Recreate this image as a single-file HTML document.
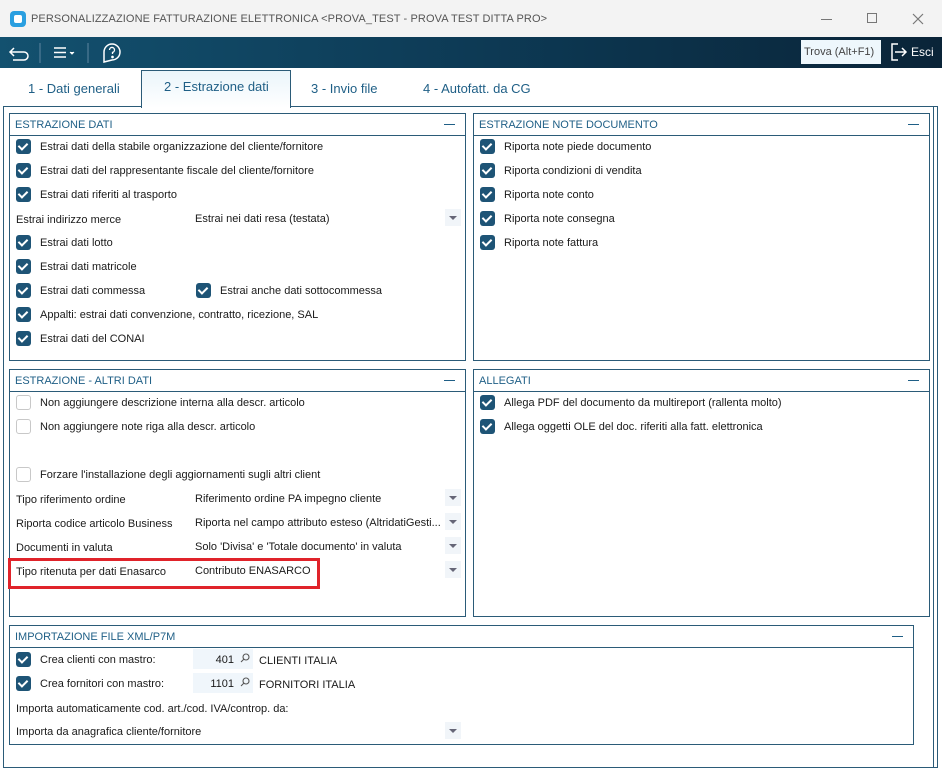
<!DOCTYPE html>
<html><head><meta charset="utf-8"><style>
*{margin:0;padding:0;box-sizing:border-box}
body{width:942px;height:771px;overflow:hidden;background:#fff;font-family:"Liberation Sans",sans-serif;font-size:11px;color:#1a1a1a;position:relative}
.a{position:absolute}
.t{position:absolute;white-space:nowrap;line-height:14px}
.panel{position:absolute;border:1px solid #2b5b78;background:#fff}
.ph{position:absolute;left:0;right:0;top:0;height:22px;border-bottom:1px solid #2b5b78;color:#1f5f86;font-size:11px;line-height:22px;padding-left:5px}
.ph:after{content:"";position:absolute;right:10px;top:10px;width:11px;height:1px;background:#1f5f86}
.cb{position:absolute;width:15px;height:15px;border-radius:3px;background:#1e5476}
.cb:after{content:"";position:absolute;left:4px;top:2px;width:4px;height:7px;border:solid #fff;border-width:0 2px 2px 0;transform:rotate(45deg)}
.cu{position:absolute;width:15px;height:15px;border-radius:3px;border:1px solid #c8c8c8;background:#fff}
.dd{position:absolute;width:16px;height:17px;background:#f1f5f9}
.dd:after{content:"";position:absolute;left:4px;top:7px;border-left:4px solid transparent;border-right:4px solid transparent;border-top:4px solid #667}
.tab{position:absolute;white-space:nowrap;font-size:13px;color:#1f5f86;line-height:16px}
</style></head><body>
<!-- title bar -->
<div class="a" style="left:0;top:0;width:942px;height:37px;background:#f3f3f3"></div>
<div class="a" style="left:10px;top:11px;width:16px;height:16px;border-radius:4px;background:#2a9fe0"></div>
<div class="a" style="left:14px;top:15px;width:8px;height:8px;border-radius:2px;background:#fff"></div>
<div class="t" style="left:31px;top:12px;font-size:11px;color:#555;letter-spacing:0.1px">PERSONALIZZAZIONE FATTURAZIONE ELETTRONICA &lt;PROVA_TEST - PROVA TEST DITTA PRO&gt;</div>
<div class="a" style="left:821px;top:19px;width:11px;height:1px;background:#777"></div>
<div class="a" style="left:867px;top:13px;width:10px;height:10px;border:1px solid #777"></div>
<svg class="a" style="left:912px;top:13px" width="12" height="12" viewBox="0 0 12 12" stroke="#777" stroke-width="1.2"><path d="M1 1 L11 11 M11 1 L1 11"/></svg>
<!-- toolbar -->
<div class="a" style="left:0;top:37px;width:942px;height:31px;background:linear-gradient(90deg,#13516f,#0d3a55 50%,#0a2438)"></div>
<svg class="a" style="left:8px;top:40px" width="130" height="26" viewBox="0 0 130 26" fill="none" stroke="#fff" stroke-width="1.5">
<path d="M6 8 L2 12 L6 16 M2 12 H16 a4 4 0 0 1 0 8 H5"/>
<line x1="32" y1="3" x2="32" y2="23" stroke="#5d86a0" stroke-width="1"/>
<path d="M46 8 H58 M46 12.5 H58 M46 17 H58"/>
<path d="M62 12 l2 2 l2-2" fill="#fff" stroke-width="1"/>
<line x1="80" y1="3" x2="80" y2="23" stroke="#5d86a0" stroke-width="1"/>
<path d="M96 22 L96 12 a8 8 0 1 1 8 8 Z"/>
<path d="M101.5 10 a2.5 2.5 0 1 1 3 2.4 v1.6" stroke-width="1.3"/>
<circle cx="104.5" cy="17" r=".6" fill="#fff"/>
</svg>
<div class="a" style="left:801px;top:40px;width:80px;height:24px;background:#eef7fc"></div>
<div class="t" style="left:804px;top:45px;color:#444">Trova (Alt+F1)</div>
<svg class="a" style="left:889px;top:42px" width="20" height="20" viewBox="0 0 20 20" fill="none" stroke="#fff" stroke-width="1.5"><path d="M9 2 H3 V18 H9"/><path d="M6 10 H17 M13 6 L17 10 L13 14"/></svg>
<div class="t" style="left:911px;top:45px;color:#fff;font-size:12px">Esci</div>
<!-- tabs -->
<div class="a" style="left:141px;top:70px;width:150px;height:38px;border:1px solid #2b5b78;border-bottom:none;background:linear-gradient(#eaf5fb,#fff)"></div>
<div class="tab" style="left:28px;top:81px">1 - Dati generali</div>
<div class="tab" style="left:164px;top:79px">2 - Estrazione dati</div>
<div class="tab" style="left:311px;top:81px">3 - Invio file</div>
<div class="tab" style="left:423px;top:81px">4 - Autofatt. da CG</div>
<div class="a" style="left:3px;top:106px;width:935px;height:662px;border:1px solid #2b5b78;border-top:none"></div>
<div class="a" style="left:3px;top:106px;width:138px;height:1px;background:#2b5b78"></div>
<div class="a" style="left:291px;top:106px;width:647px;height:1px;background:#2b5b78"></div>
<div class="a" style="left:933px;top:107px;width:1px;height:660px;background:#2b5b78"></div>

<!-- ESTRAZIONE DATI -->
<div class="panel" style="left:9px;top:113px;width:457px;height:248px"><div class="ph">ESTRAZIONE DATI</div></div>
<div class="cb" style="left:16px;top:139px"></div><div class="t" style="left:40px;top:140px">Estrai dati della stabile organizzazione del cliente/fornitore</div>
<div class="cb" style="left:16px;top:163px"></div><div class="t" style="left:40px;top:164px">Estrai dati del rappresentante fiscale del cliente/fornitore</div>
<div class="cb" style="left:16px;top:187px"></div><div class="t" style="left:40px;top:188px">Estrai dati riferiti al trasporto</div>
<div class="t" style="left:16px;top:213px">Estrai indirizzo merce</div><div class="t" style="left:195px;top:212px">Estrai nei dati resa (testata)</div><div class="dd" style="left:445px;top:209px"></div>
<div class="cb" style="left:16px;top:235px"></div><div class="t" style="left:40px;top:236px">Estrai dati lotto</div>
<div class="cb" style="left:16px;top:259px"></div><div class="t" style="left:40px;top:260px">Estrai dati matricole</div>
<div class="cb" style="left:16px;top:283px"></div><div class="t" style="left:40px;top:284px">Estrai dati commessa</div>
<div class="cb" style="left:196px;top:283px"></div><div class="t" style="left:220px;top:284px">Estrai anche dati sottocommessa</div>
<div class="cb" style="left:16px;top:307px"></div><div class="t" style="left:40px;top:308px">Appalti: estrai dati convenzione, contratto, ricezione, SAL</div>
<div class="cb" style="left:16px;top:331px"></div><div class="t" style="left:40px;top:332px">Estrai dati del CONAI</div>

<!-- NOTE DOCUMENTO -->
<div class="panel" style="left:473px;top:113px;width:457px;height:248px"><div class="ph">ESTRAZIONE NOTE DOCUMENTO</div></div>
<div class="cb" style="left:480px;top:139px"></div><div class="t" style="left:504px;top:140px">Riporta note piede documento</div>
<div class="cb" style="left:480px;top:163px"></div><div class="t" style="left:504px;top:164px">Riporta condizioni di vendita</div>
<div class="cb" style="left:480px;top:187px"></div><div class="t" style="left:504px;top:188px">Riporta note conto</div>
<div class="cb" style="left:480px;top:211px"></div><div class="t" style="left:504px;top:212px">Riporta note consegna</div>
<div class="cb" style="left:480px;top:235px"></div><div class="t" style="left:504px;top:236px">Riporta note fattura</div>

<!-- ALTRI DATI -->
<div class="panel" style="left:9px;top:369px;width:457px;height:248px"><div class="ph">ESTRAZIONE - ALTRI DATI</div></div>
<div class="cu" style="left:16px;top:395px"></div><div class="t" style="left:40px;top:396px">Non aggiungere descrizione interna alla descr. articolo</div>
<div class="cu" style="left:16px;top:419px"></div><div class="t" style="left:40px;top:420px">Non aggiungere note riga alla descr. articolo</div>
<div class="cu" style="left:16px;top:467px"></div><div class="t" style="left:40px;top:468px">Forzare l'installazione degli aggiornamenti sugli altri client</div>
<div class="t" style="left:16px;top:493px">Tipo riferimento ordine</div><div class="t" style="left:195px;top:492px">Riferimento ordine PA impegno cliente</div><div class="dd" style="left:445px;top:489px"></div>
<div class="t" style="left:16px;top:517px">Riporta codice articolo Business</div><div class="t" style="left:195px;top:516px">Riporta nel campo attributo esteso (AltridatiGesti...</div><div class="dd" style="left:445px;top:513px"></div>
<div class="t" style="left:16px;top:541px">Documenti in valuta</div><div class="t" style="left:195px;top:540px">Solo 'Divisa' e 'Totale documento' in valuta</div><div class="dd" style="left:445px;top:537px"></div>
<div class="t" style="left:16px;top:565px">Tipo ritenuta per dati Enasarco</div><div class="t" style="left:195px;top:564px">Contributo ENASARCO</div><div class="dd" style="left:445px;top:561px"></div>
<div class="a" style="left:8px;top:558px;width:312px;height:31px;border:3px solid #e0232a"></div>

<!-- ALLEGATI -->
<div class="panel" style="left:473px;top:369px;width:457px;height:248px"><div class="ph">ALLEGATI</div></div>
<div class="cb" style="left:480px;top:395px"></div><div class="t" style="left:504px;top:396px">Allega PDF del documento da multireport (rallenta molto)</div>
<div class="cb" style="left:480px;top:419px"></div><div class="t" style="left:504px;top:420px">Allega oggetti OLE del doc. riferiti alla fatt. elettronica</div>

<!-- IMPORTAZIONE -->
<div class="panel" style="left:9px;top:625px;width:905px;height:120px"><div class="ph">IMPORTAZIONE FILE XML/P7M</div></div>
<div class="cb" style="left:16px;top:652px"></div><div class="t" style="left:40px;top:653px">Crea clienti con mastro:</div>
<div class="a" style="left:193px;top:649px;width:60px;height:20px;background:#f0f6fb"></div>
<div class="t" style="left:193px;top:653px;width:41px;text-align:right">401</div>
<svg class="a" style="left:240px;top:653px" width="10" height="10" viewBox="0 0 10 10" fill="none" stroke="#555" stroke-width="1.1"><circle cx="6" cy="4" r="3"/><path d="M4 6 L1 9"/></svg>
<div class="t" style="left:259px;top:654px">CLIENTI ITALIA</div>
<div class="cb" style="left:16px;top:676px"></div><div class="t" style="left:40px;top:677px">Crea fornitori con mastro:</div>
<div class="a" style="left:193px;top:673px;width:60px;height:20px;background:#f0f6fb"></div>
<div class="t" style="left:193px;top:677px;width:41px;text-align:right">1101</div>
<svg class="a" style="left:240px;top:677px" width="10" height="10" viewBox="0 0 10 10" fill="none" stroke="#555" stroke-width="1.1"><circle cx="6" cy="4" r="3"/><path d="M4 6 L1 9"/></svg>
<div class="t" style="left:259px;top:678px">FORNITORI ITALIA</div>
<div class="t" style="left:16px;top:702px">Importa automaticamente cod. art./cod. IVA/controp. da:</div>
<div class="t" style="left:16px;top:725px">Importa da anagrafica cliente/fornitore</div><div class="dd" style="left:445px;top:722px"></div>
</body></html>
